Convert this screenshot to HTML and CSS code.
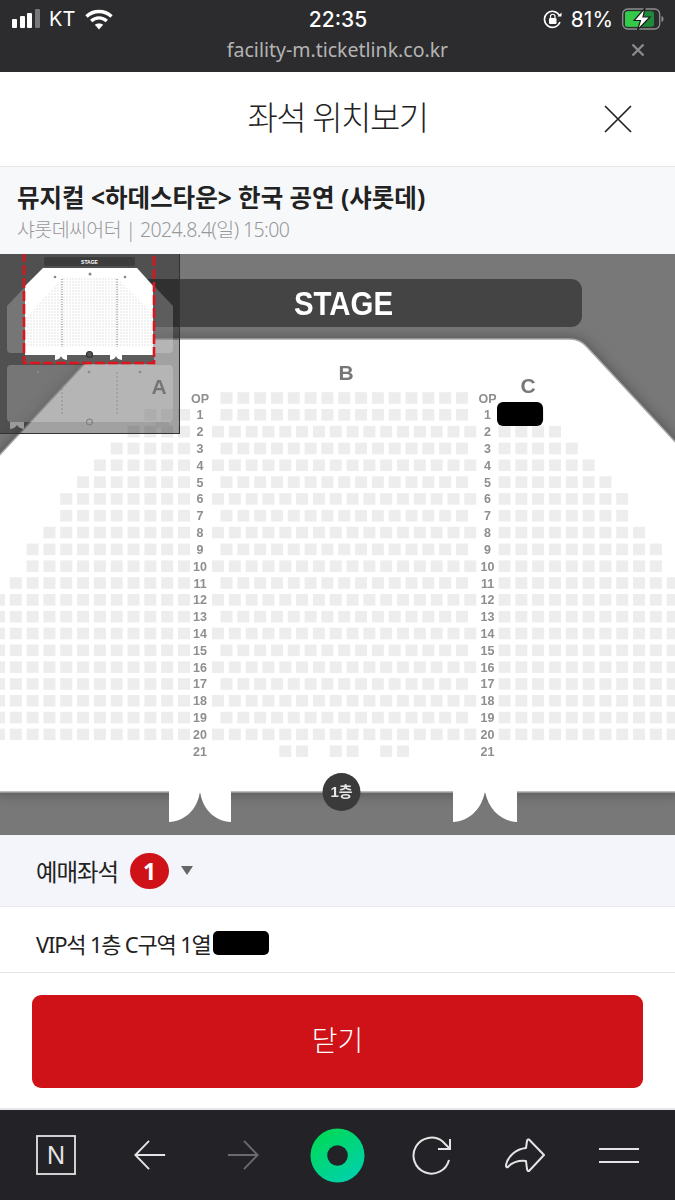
FILE: index.html
```html
<!DOCTYPE html>
<html lang="ko">
<head>
  <meta charset="UTF-8" />
  <title>좌석 위치보기</title>
  <link rel="stylesheet" href="styles.css">
</head>
<body>
  <div class="top-bar">
    <div class="status">
      <div class="status-left">
        <svg class="signal" width="30" height="20" viewBox="0 0 30 20">
          <rect x="0" y="10" width="5" height="9" rx="1" fill="#fff"/>
          <rect x="8" y="7" width="5" height="12" rx="1" fill="#fff"/>
          <rect x="15" y="4" width="5" height="15" rx="1" fill="#fff"/>
          <rect x="23" y="0" width="5" height="19" rx="1" fill="#77777a"/>
        </svg>
        <span class="carrier">KT</span>
        <svg class="wifi" width="28" height="21" viewBox="0 0 28 21" fill="none" stroke="#fff" stroke-width="3.4">
          <path d="M1.5 7.5C8.5 .8 19.500 .8 26.500 7.500"/>
          <path d="M6.200 12C10.800 7.800 17.200 7.800 21.800 12"/>
          <path d="M14 20.500l-4.200-4.700c2.500-1.900 5.900-1.900 8.400 0z" fill="#fff" stroke="none"/>
        </svg>
      </div>
      <div class="clock">22:35</div>
      <div class="status-right">
        <svg class="lock" width="20" height="19" viewBox="0 0 20 19" fill="none" stroke="#fff" stroke-width="1.600">
          <path d="M16.500 5.500A8 8 0 1 0 17 12"/>
          <path d="M14.500 6.500h4v-4" stroke="none" fill="#fff"/>
          <rect x="6" y="8" width="7.500" height="6" rx="1" fill="#fff" stroke="none"/>
          <path d="M7.500 8V6.500a2.250 2.250 0 0 1 4.500 0V8" stroke-width="1.200"/>
        </svg>
        <span class="percent">81%</span>
        <svg class="battery" width="42" height="22" viewBox="0 0 42 22">
          <rect x=".7" y="1" width="37" height="20" rx="5" fill="none" stroke="#8f8f8f" stroke-width="1.300"/>
          <rect x="3" y="3.200" width="29" height="15.600" rx="2.500" fill="#1f8a3a"/>
          <rect x="3" y="3.200" width="17" height="15.600" rx="2.500" fill="#35c94a"/>
          <path d="M39.500 8v6c1.500-.5 2-1.600 2-3s-.5-2.500-2-3z" fill="#8f8f8f"/>
          <path d="M23 0L12 12.500h6.500L15.500 22 28 9h-7z" fill="#fff" stroke="#1c1c1c" stroke-width="1.200"/>
        </svg>
      </div>
    </div>
    <div class="url-row">
      <span class="url">facility-m.ticketlink.co.kr</span>
      <svg class="url-close" width="14" height="14" viewBox="0 0 14 14" stroke="#8b8b8b" stroke-width="2.400">
        <path d="M1.500 1.500l11 11M12.500 1.500l-11 11"/>
      </svg>
    </div>
  </div>

  <div class="modal-head">
    <h1 class="modal-title">좌석 위치보기</h1>
    <svg class="modal-close" width="30" height="30" viewBox="0 0 30 30" stroke="#222" stroke-width="1.700">
      <path d="M2 2l26 26M28 2L2 28"/>
    </svg>
  </div>

  <div class="show-info">
    <div class="show-name">뮤지컬 &lt;하데스타운&gt; 한국 공연 (샤롯데)</div>
    <div class="show-place">샤롯데씨어터 | 2024.8.4(일) 15:00</div>
  </div>

  <div class="seat-map">
    <svg id="hall" class="hall" width="675" height="581" viewBox="0 254 675 581">
      <rect x="-5" y="249" width="685" height="591" fill="#787878"/>
      <rect x="105" y="279" width="477" height="48" rx="11" fill="#444"/>
      <text class="stage-text" x="343.500" y="315" text-anchor="middle" textLength="99" lengthAdjust="spacingAndGlyphs">STAGE</text>
      <path class="hall-floor" d="M-5 460L102 345Q108 339 116 339H570Q580 339 587 347L680 447V792H-5z"/>
      <path class="door" d="M169 790V822C185 821 197 810 200 792C203 810 215 821 231 822V790z"/>
      <path class="door" d="M453 790V822C469 821 481 810 485 792C489 810 501 821 517 822V790z"/>
      <text class="block-name" x="159" y="394" text-anchor="middle">A</text>
      <text class="block-name" x="346" y="380" text-anchor="middle">B</text>
      <text class="block-name" x="528" y="393" text-anchor="middle">C</text>
      <g id="seats"></g>
      <rect class="blob" x="497" y="402" width="46" height="24" rx="6"/>
      <circle cx="341.500" cy="792" r="19" fill="#3a3a3a"/>
      <text class="floor-text" x="341.500" y="797" text-anchor="middle">1층</text>
    </svg>

    <div class="mini-map">
      <svg width="180" height="179" viewBox="0 0 180 179">
        <defs>
          <pattern id="mini-grid" width="3" height="3" patternUnits="userSpaceOnUse">
            <rect width="3" height="3" fill="#fff"/>
            <rect width="2" height="2" fill="#f1f1f1"/>
          </pattern>
        </defs>
        <path class="mini-panel" d="M7 52L43 14H137L173 52V95Q173 99 169 99H11Q7 99 7 95z"/>
        <rect class="mini-panel" x="7" y="111" width="166" height="57" rx="4"/>
        <rect x="44" y="3" width="91" height="9" rx="2" fill="#3c3c3c"/>
        <text class="mini-stage" x="89.500" y="9.500" text-anchor="middle">STAGE</text>
        <path d="M25 32L43 14H137L153 32V101H25z" fill="#fff"/>
        <path d="M25 65L62 24H117L153 60V92H25z" fill="url(#mini-grid)"/>
        <path d="M62 25V93M117 25V93" stroke="#b5b5b5" stroke-width="2" stroke-dasharray="1 1.500"/>
        <path class="mini-faint" d="M62 118V162M117 118V162"/>
        <g fill="#888">
          <circle cx="55" cy="23" r="1.300"/><circle cx="90" cy="20" r="1.500"/><circle cx="125" cy="23" r="1.300"/>
          <circle cx="38" cy="118" r="1.300"/><circle cx="89" cy="118" r="1.300"/><circle cx="140" cy="118" r="1.300"/>
        </g>
        <rect x="25" y="101" width="129" height="9" fill="#5c5c5c"/>
        <path d="M55 100V106Q60 105.500 61 102Q62 105.500 67 106V100z" fill="#fff"/>
        <path d="M110 100V106Q115 105.500 116 102Q117 105.500 122 106V100z" fill="#fff"/>
        <circle cx="89.500" cy="100.500" r="3" fill="#555" stroke="#333" stroke-width="1.200"/>
        <circle cx="89.500" cy="168" r="3" fill="none" stroke="#777" stroke-width="1"/>
        <path d="M10 168V175Q15 174.500 17 171Q19 174.500 24 175V168zM155 168V175Q160 174.500 162 171Q164 174.500 169 175V168z" fill="#9a9a9a"/>
        <path d="M24 -2V109H154V-2" fill="none" stroke="#e0141c" stroke-width="2.600" stroke-dasharray="10 3"/>
      </svg>
    </div>
  </div>

  <div class="picked-head">
    <span class="picked-label">예매좌석</span>
    <span class="badge">1</span>
    <span class="caret"></span>
  </div>

  <div class="picked-row">
    <span>VIP석 1층 C구역 1열</span><span class="redact"></span>
  </div>

  <div class="btn-area">
    <button class="close-btn">닫기</button>
  </div>

  <div class="tool-bar">
    <svg width="42" height="42" viewBox="0 0 42 42" fill="none" stroke="#e4e4e4">
      <rect x="2" y="2" width="38" height="38" stroke-width="1.800"/>
      <text class="n-mark" x="21" y="29.500" text-anchor="middle">N</text>
    </svg>
    <svg width="34" height="34" viewBox="0 0 36 36" fill="none" stroke="#e4e4e4" stroke-width="2">
      <path d="M34 18H3M17 3L2.500 18 17 33"/>
    </svg>
    <svg width="34" height="34" viewBox="0 0 36 36" fill="none" stroke="#6b6b6e" stroke-width="2">
      <path d="M2 18H33M19 3L33.500 18 19 33"/>
    </svg>
    <svg width="55" height="55" viewBox="0 0 56 56">
      <defs>
        <linearGradient id="green" x1="0.200" y1="0.100" x2="0.800" y2="1">
          <stop offset="0" stop-color="#00d95a"/>
          <stop offset="1" stop-color="#00d0b0"/>
        </linearGradient>
      </defs>
      <circle cx="28" cy="28" r="27.500" fill="url(#green)"/>
      <circle cx="28" cy="28" r="10.500" fill="#232327"/>
    </svg>
    <svg width="40" height="40" viewBox="0 0 40 40" fill="none" stroke="#e4e4e4" stroke-width="2">
      <path d="M38 25A18 18 0 1 1 31.700 6.500L39 14"/>
      <path d="M39 4V14H27"/>
    </svg>
    <svg width="40" height="35" viewBox="0 0 40 35" fill="none" stroke="#e4e4e4" stroke-width="2" stroke-linejoin="round">
      <path d="M24 1.500L39 17 24 33Q22.500 33.500 22 31L21 23C13 22 6 25 3 29Q1 30 1 27C3 18 11 11 21 10L22 3Q22.500 1 24 1.500z"/>
    </svg>
    <svg width="40" height="16" viewBox="0 0 40 16" stroke="#e4e4e4" stroke-width="2">
      <path d="M0 2H40M0 15H40"/>
    </svg>
  </div>

  <script src="script.js"></script>
</body>
</html>
```

FILE: styles.css
```css
* {
  box-sizing: border-box;
}

body {
  margin: 0;
  width: 675px;
  height: 1200px;
  overflow: hidden;
  background: #fff;
  color: #222;
  font-family: "Noto Sans", "Noto Sans CJK KR", sans-serif;
}

svg {
  display: block;
}

.top-bar {
  height: 72px;
  background: #2c2c2e;
  color: #fff;
}

.status {
  display: grid;
  grid-template-columns: 1fr auto 1fr;
  align-items: center;
  height: 38px;
  padding: 0 11px 0 12px;
}

.status-left,
.status-right {
  display: flex;
  align-items: center;
}

.status-right {
  justify-content: flex-end;
}

.carrier {
  margin: 0 10px 0 7px;
  font-family: Inter, sans-serif;
  font-size: 20px;
}

.clock {
  font-family: Inter, sans-serif;
  font-size: 21px;
  font-weight: 500;
}

.percent {
  margin: 0 9px 0 8px;
  font-family: Inter, sans-serif;
  font-size: 21px;
}

.url-row {
  position: relative;
  text-align: center;
  font-size: 19.500px;
  line-height: 24px;
  color: #b4b4b4;
}

.url-close {
  position: absolute;
  right: 30px;
  top: 5px;
}

.modal-head {
  position: relative;
  height: 95px;
  border-bottom: 1px solid #e6e6e6;
  background: #fff;
}

.modal-title {
  margin: 0;
  text-align: center;
  font-size: 33px;
  font-weight: 300;
  line-height: 92px;
  letter-spacing: -1.500px;
}

.modal-close {
  position: absolute;
  left: 603px;
  top: 32px;
}

.show-info {
  height: 87px;
  padding: 15px 17px 0;
  background: #f7f8fa;
}

.show-name {
  font-size: 24.500px;
  font-weight: 700;
  line-height: 32px;
}

.show-place {
  margin-top: 2px;
  font-size: 19.500px;
  font-weight: 300;
  line-height: 28px;
  letter-spacing: -.6px;
  color: #999;
}

.seat-map {
  position: relative;
  height: 581px;
  overflow: hidden;
}

.hall {
  filter: blur(.5px);
}

.hall text {
  font-family: "Liberation Sans", "Noto Sans CJK KR", sans-serif;
  font-weight: 700;
}

.hall .stage-text {
  font-size: 34px;
  fill: #fff;
}

.hall-floor {
  fill: #fff;
  stroke: #a8a8a8;
  stroke-width: 1.500px;
  filter: drop-shadow(0 0 7px #4f4f4f);
}

.door {
  fill: #fff;
}

.hall .block-name {
  font-size: 21px;
  fill: #777;
}

.seat {
  fill: #ededed;
}

.hall .row-label {
  font-size: 12.500px;
  fill: #8e8e8e;
}

.blob {
  fill: #000;
}

.hall .floor-text {
  font-size: 15px;
  fill: #e8e8e8;
}

.mini-map {
  position: absolute;
  left: 0;
  top: 0;
  width: 180px;
  height: 180px;
  border-right: 1px solid #333;
  border-bottom: 1px solid #333;
  background: rgba(20, 20, 20, .4);
}

.mini-panel {
  fill: rgba(255, 255, 255, .22);
}

.mini-faint {
  stroke: rgba(120, 120, 120, .6);
  stroke-width: 1px;
  stroke-dasharray: 2 2;
}

.mini-stage {
  font-family: "Liberation Sans", sans-serif;
  font-size: 5px;
  font-weight: 700;
  fill: #fff;
}

.picked-head {
  display: flex;
  align-items: center;
  height: 72px;
  padding-left: 36px;
  border-bottom: 1px solid #e9e9ec;
  background: #f4f5fa;
}

.picked-label {
  font-size: 23.400px;
  letter-spacing: -1px;
}

.badge {
  width: 39px;
  height: 36px;
  margin-left: 12px;
  border-radius: 50%;
  background: #cf1218;
  color: #fff;
  font-size: 23px;
  font-weight: 700;
  line-height: 36px;
  text-align: center;
}

.caret {
  width: 0;
  height: 0;
  margin-left: 12px;
  border-left: 6px solid transparent;
  border-right: 6px solid transparent;
  border-top: 9px solid #666;
}

.picked-row {
  display: flex;
  align-items: center;
  height: 66px;
  padding: 6px 0 0 36px;
  border-bottom: 1px solid #e4e4e4;
  font-size: 22px;
  letter-spacing: -1.200px;
}

.redact {
  width: 56px;
  height: 24px;
  margin-left: 2px;
  border-radius: 5px;
  background: #000;
  filter: blur(.7px);
}

.btn-area {
  height: 137px;
  padding: 22px 32px 0;
  border-bottom: 2px solid #e6e6e6;
}

.close-btn {
  display: block;
  width: 611px;
  height: 93px;
  padding-bottom: 6px;
  border: 0;
  border-radius: 9px;
  background: #cf1218;
  color: #fff;
  font-family: inherit;
  font-size: 28px;
  font-weight: 300;
}

.tool-bar {
  display: grid;
  grid-template-columns: repeat(7, 93.800px);
  align-items: center;
  justify-items: center;
  height: 90px;
  padding-left: 9px;
  background: #232327;
}

.n-mark {
  font-family: "Liberation Sans", sans-serif;
  font-size: 25px;
  fill: #e4e4e4;
  stroke: none;
}
```

FILE: script.js
```js
// seats per row: [label, left block, right block]
const rows = [
  ["OP", 0, 0], ["1", 3, 3], ["2", 4, 4], ["3", 5, 5], ["4", 6, 6], ["5", 7, 7],
  ["6", 8, 8], ["7", 8, 8], ["8", 9, 9], ["9", 10, 10], ["10", 10, 10], ["11", 11, 11],
  ["12", 12, 11], ["13", 12, 11], ["14", 12, 11], ["15", 12, 11], ["16", 12, 11],
  ["17", 12, 11], ["18", 12, 11], ["19", 12, 11], ["20", 12, 11], ["21", 0, 0]
];

const NS = "http://www.w3.org/2000/svg";
const PITCH = 16.82;
const seats = document.getElementById("seats");

function addSeat(cx, cy) {
  const r = document.createElementNS(NS, "rect");
  r.setAttribute("class", "seat");
  r.setAttribute("x", cx - 6);
  r.setAttribute("y", cy - 5.8);
  r.setAttribute("width", 12);
  r.setAttribute("height", 11.6);
  seats.appendChild(r);
}

function addLabel(x, y, text) {
  const t = document.createElementNS(NS, "text");
  t.setAttribute("class", "row-label");
  t.setAttribute("x", x);
  t.setAttribute("y", y + 4.5);
  t.setAttribute("text-anchor", "middle");
  t.textContent = text;
  document.getElementById("hall").appendChild(t);
}

rows.forEach((row, i) => {
  const y = 398 + i * 16.82;
  for (let k = 0; k < row[1]; k++) addSeat(184 - k * PITCH, y);
  for (let k = 0; k < row[2]; k++) addSeat(504.5 + k * PITCH, y);

  if (row[0] === "21") {
    [4, 5, 7, 8, 10, 11].forEach(k => addSeat(218 + k * PITCH, y));
  } else if (i % 2 === 0 && i > 0) {
    for (let k = 0; k < 16; k++) addSeat(218 + k * PITCH, y);
  } else {
    for (let k = 0; k < 15; k++) addSeat(226.5 + k * PITCH, y);
  }

  addLabel(200, y, row[0]);
  addLabel(487.5, y, row[0]);
});

// labels and the floor badge have to stay above the seats
const hall = document.getElementById("hall");
hall.querySelectorAll(".blob, circle, .floor-text").forEach(el => hall.appendChild(el));
```
